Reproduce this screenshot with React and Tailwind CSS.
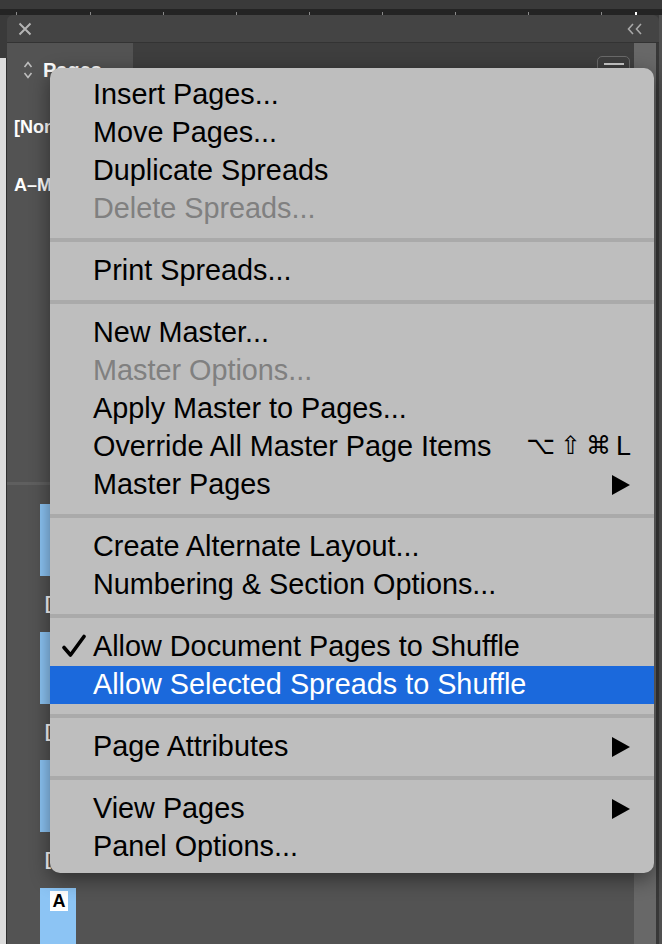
import React from 'react';

const sections = [
  [
    { label: 'Insert Pages...' },
    { label: 'Move Pages...' },
    { label: 'Duplicate Spreads' },
    { label: 'Delete Spreads...', disabled: true },
  ],
  [{ label: 'Print Spreads...' }],
  [
    { label: 'New Master...' },
    { label: 'Master Options...', disabled: true },
    { label: 'Apply Master to Pages...' },
    { label: 'Override All Master Page Items', shortcut: true },
    { label: 'Master Pages', submenu: true },
  ],
  [
    { label: 'Create Alternate Layout...' },
    { label: 'Numbering & Section Options...' },
  ],
  [
    { label: 'Allow Document Pages to Shuffle', checked: true },
    { label: 'Allow Selected Spreads to Shuffle', active: true },
  ],
  [{ label: 'Page Attributes', submenu: true }],
  [
    { label: 'View Pages', submenu: true },
    { label: 'Panel Options...' },
  ],
];

const Triangle = () => (
  <svg width="18" height="20" viewBox="0 0 18 20" className="absolute right-[24px] top-[9px]">
    <polygon points="0,0 18,10 0,20" fill="#000" />
  </svg>
);

const Check = () => (
  <svg width="24" height="24" viewBox="0 0 24 24" className="absolute left-[12px] top-[6px]">
    <path d="M2 13.5 L8.5 21 L22 2.5" fill="none" stroke="#000" strokeWidth="3.6" strokeLinecap="round" strokeLinejoin="round" />
  </svg>
);

const MenuItem = ({ item }) => {
  const color = item.active ? 'text-white bg-[#1b69dc]' : item.disabled ? 'text-[#808080]' : 'text-black';
  return (
    <div className={`relative h-[38px] leading-[36px] pl-[43px] whitespace-nowrap ${color}`}>
      {item.checked && <Check />}
      {item.label}
      {item.submenu && <Triangle />}
      {item.shortcut && (
        <span className="absolute right-[23px] top-0 flex gap-[5px] text-[25px] font-['DejaVu_Sans',sans-serif]">
          <span>⌥</span>
          <span>⇧</span>
          <span>⌘</span>
          <span className="font-['Liberation_Sans',sans-serif] text-[27px]">L</span>
        </span>
      )}
    </div>
  );
};

const Thumb = ({ label }) => (
  <div className="flex flex-col">
    <div className="ml-[33px] w-[36px] h-[72px] bg-[#8cc4f4]" />
    <div className="ml-[38px] h-[56px] pt-[14px] text-[18px] font-bold text-white">{label}</div>
  </div>
);

export default function App() {
  return (
    <div className="relative w-[662px] h-[944px] overflow-hidden bg-[#3a3a3a] font-['Liberation_Sans',Arial,sans-serif]">
      {/* top strip + ruler */}
      <div className="h-[9px] bg-[#3a3a3a]" />
      <div className="relative h-[6px] bg-[#242424]">
        {[16, 90, 163, 236, 309, 382, 455, 528, 601].map((x) => (
          <div key={x} className="absolute top-[3px] w-px h-[3px] bg-[#8a8a8a]" style={{ left: x }} />
        ))}
        <div className="absolute top-[3px] left-[635px] w-[2px] h-[3px] bg-white" />
      </div>

      <div className="flex h-[929px]">
        {/* left strip */}
        <div className="w-[7px] shrink-0 flex flex-col">
          <div className="h-[43px] shrink-0 bg-[#3a3a3a]" />
          <div className="flex-1 bg-[#dcdcdc] border-r border-[#2e2e2e]" />
        </div>

        {/* panel */}
        <div className="w-[652px] shrink-0 flex flex-col rounded-tl-[6px] rounded-tr-[6px] overflow-hidden">
          <div className="h-[28px] shrink-0 bg-[#444444] border-b border-[#333] flex items-center justify-between px-[10px]">
            <svg width="14" height="14" viewBox="0 0 14 14" className="ml-[1px]">
              <path d="M1.5 1.5 L12.5 12.5 M12.5 1.5 L1.5 12.5" stroke="#b4b4b4" strokeWidth="2" />
            </svg>
            <svg width="16" height="12" viewBox="0 0 16 12" className="mr-[6px]">
              <path d="M6 1 L1.5 6 L6 11 M14 1 L9.5 6 L14 11" fill="none" stroke="#a8a8a8" strokeWidth="1.6" />
            </svg>
          </div>

          <div className="flex flex-1 min-h-0">
            <div className="flex-1 flex flex-col min-h-0">
              {/* tab row */}
              <div className="flex h-[56px] shrink-0">
                <div className="w-[126px] bg-[#535353] flex items-center gap-[10px] pl-[16px] pb-[2px]">
                  <svg width="10" height="20" viewBox="0 0 10 20">
                    <path d="M1.5 7 L5 2.5 L8.5 7 M1.5 13 L5 17.5 L8.5 13" fill="none" stroke="#bdbdbd" strokeWidth="1.6" />
                  </svg>
                  <span className="text-[20px] font-bold text-white">Pages</span>
                </div>
                <div className="flex-1 bg-[#3e3e3e] flex justify-end pt-[13px] pr-[4px]">
                  <div className="w-[33px] h-[30px] rounded-[5px] border border-[#6a6a6a] flex justify-center pt-[6px]">
                    <div className="w-[20px] h-[2px] bg-[#c8c8c8]" />
                  </div>
                </div>
              </div>

              {/* body */}
              <div className="flex-1 min-h-0 overflow-hidden bg-[#535353] flex flex-col">
                <div className="h-[383px] shrink-0 pl-[7px] pt-[15px] text-[18px] font-bold text-white">
                  <div className="h-[58px]">[None]</div>
                  <div>A–Master</div>
                </div>
                <div className="h-[3px] shrink-0 bg-[#5f5f5f]" />
                <div className="pt-[19px] shrink-0">
                  <Thumb label="[" />
                  <Thumb label="[" />
                  <Thumb label="[" />
                  <div className="ml-[33px] w-[36px] h-[72px] bg-[#8cc4f4] pl-[10px] pt-[3px]">
                    <div className="w-[18px] h-[20px] bg-white text-black text-[18px] font-bold leading-[20px] text-center">A</div>
                  </div>
                </div>
              </div>
            </div>
            {/* scrollbar */}
            <div className="w-[22px] shrink-0 bg-[#686868]" />
            <div className="w-[3px] shrink-0 bg-[#383838]" />
          </div>
        </div>
        <div className="flex-1 bg-[#505050]" />
      </div>

      {/* context menu */}
      <div className="absolute left-[50px] top-[68px] w-[604px] rounded-[10px] bg-[#bebebe] pt-[8px] pb-[7px] text-[28.8px] shadow-[0_6px_20px_rgba(0,0,0,0.45)] overflow-hidden">
        {sections.map((sec, i) => (
          <div key={i}>
            {i > 0 && (
              <div className="py-[10px]">
                <div className="h-[4px] bg-[#aaaaaa]" />
              </div>
            )}
            {sec.map((item) => (
              <MenuItem key={item.label} item={item} />
            ))}
          </div>
        ))}
      </div>
    </div>
  );
}
